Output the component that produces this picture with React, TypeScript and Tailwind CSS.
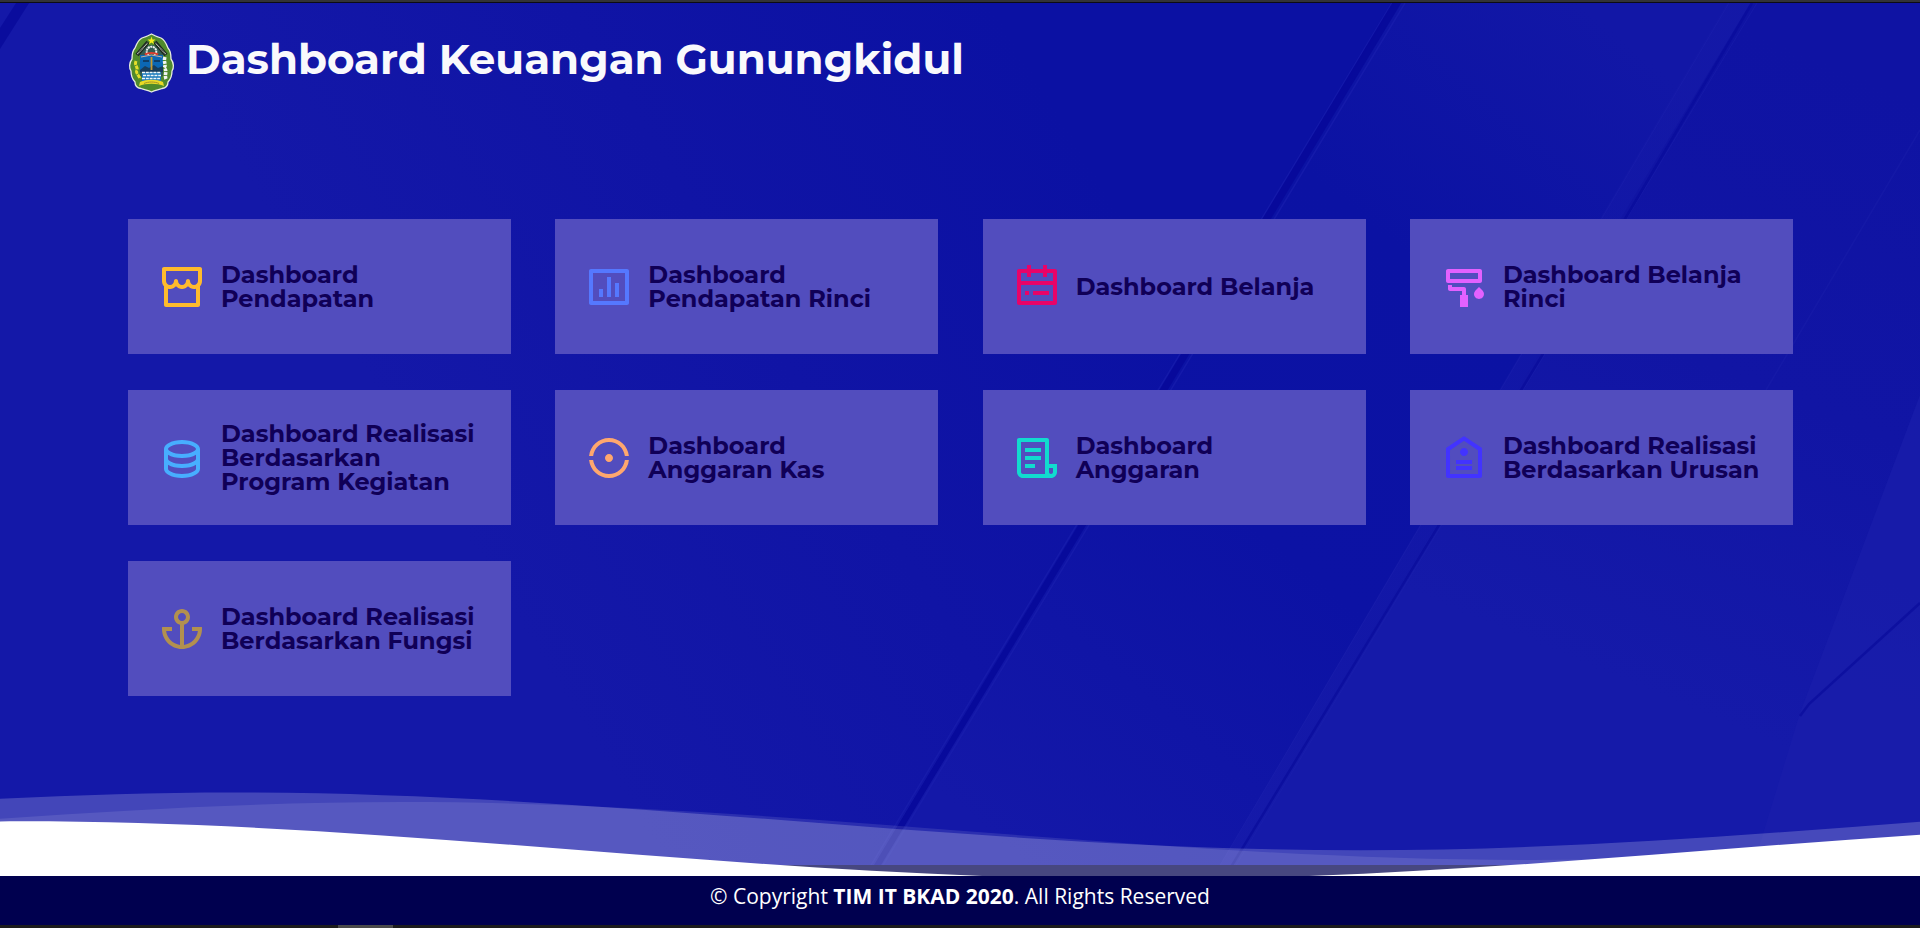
import type { IconType } from "react-icons";
import {
  RiAnchorLine,
  RiBarChartBoxLine,
  RiCalendarTodoLine,
  RiDatabase2Line,
  RiFileList3Line,
  RiGradienterLine,
  RiPaintBrushLine,
  RiPriceTag2Line,
  RiStoreLine,
} from "react-icons/ri";

type Card = { title: string; Icon: IconType; color: string };

const cards: Card[] = [
  { title: "Dashboard Pendapatan", Icon: RiStoreLine, color: "text-[#ffbb2c]" },
  { title: "Dashboard Pendapatan Rinci", Icon: RiBarChartBoxLine, color: "text-[#5578ff]" },
  { title: "Dashboard Belanja", Icon: RiCalendarTodoLine, color: "text-[#e80368]" },
  { title: "Dashboard Belanja Rinci", Icon: RiPaintBrushLine, color: "text-[#e361ff]" },
  { title: "Dashboard Realisasi Berdasarkan Program Kegiatan", Icon: RiDatabase2Line, color: "text-[#47aeff]" },
  { title: "Dashboard Anggaran Kas", Icon: RiGradienterLine, color: "text-[#ffa76e]" },
  { title: "Dashboard Anggaran", Icon: RiFileList3Line, color: "text-[#11dbcf]" },
  { title: "Dashboard Realisasi Berdasarkan Urusan", Icon: RiPriceTag2Line, color: "text-[#4233ff]" },
  { title: "Dashboard Realisasi Berdasarkan Fungsi", Icon: RiAnchorLine, color: "text-[#b2904f]" },
];

function Backdrop() {
  return (
    <svg className="absolute inset-0 h-full w-full" viewBox="0 3 1920 862" preserveAspectRatio="none">
      <defs>
        <linearGradient id="left" gradientUnits="userSpaceOnUse" x1="480" y1="560" x2="1100" y2="180">
          <stop offset="0" stopColor="#1418a8" />
          <stop offset="0.5" stopColor="#1014a5" />
          <stop offset="1" stopColor="#0b11a3" />
        </linearGradient>
        <linearGradient id="mid" gradientUnits="userSpaceOnUse" x1="950" y1="800" x2="1600" y2="20">
          <stop offset="0" stopColor="#1418a8" />
          <stop offset="0.4" stopColor="#0c12a4" />
          <stop offset="0.7" stopColor="#0b12a3" />
          <stop offset="1" stopColor="#1217a6" />
        </linearGradient>
        <linearGradient id="right" gradientUnits="userSpaceOnUse" x1="1800" y1="50" x2="1550" y2="650">
          <stop offset="0" stopColor="#0f13a3" />
          <stop offset="0.5" stopColor="#1115a4" />
          <stop offset="1" stopColor="#151aa9" />
        </linearGradient>
        <linearGradient id="band" gradientUnits="userSpaceOnUse" x1="1740" y1="0" x2="1225" y2="867">
          <stop offset="0" stopColor="#161aa8" stopOpacity="0.35" />
          <stop offset="0.5" stopColor="#161aa9" stopOpacity="0.6" />
          <stop offset="1" stopColor="#181cab" stopOpacity="0.6" />
        </linearGradient>
      </defs>
      <rect x="0" y="0" width="1920" height="870" fill="url(#left)" />
      <polygon points="1397,0 1760,0 1233,870 870,870" fill="url(#mid)" />
      <polygon points="1752,0 1920,0 1920,870 1229,870" fill="url(#right)" />
      <polygon points="1729,0 1752,0 1229,870 1217,870" fill="url(#band)" />
      <polygon points="1920,395 1920,870 1752,870 1800,713" fill="#1a1eab" opacity="0.7" />
      <path d="M1392 3L870 867M1405 3L882 867" stroke="#1c21b0" strokeWidth="1.5" opacity="0.55" />
      <polygon points="1394,0 1403,0 878,870 871,870" fill="#07099a" opacity="0.9" />
      <path d="M1729 3L1219 867M1757 3L1235 867" stroke="#1e23b0" strokeWidth="1" opacity="0.4" />
      <path d="M1752 3L1625 219L1231 867" fill="none" stroke="#080b9b" strokeWidth="2.5" opacity="0.7" />
      <path d="M1920 130L1766 390" stroke="#1e22ad" strokeWidth="1.5" opacity="0.35" />
      <path d="M1920 603L1809 704L1800 716" fill="none" stroke="#0b0e9d" strokeWidth="2.5" opacity="0.8" />
      <polygon points="18,0 31,0 0,49 0,28" fill="#080a9b" opacity="0.85" />
    </svg>
  );
}

function Crest() {
  return (
    <svg className="h-[60px] w-[47px] shrink-0" viewBox="0 0 47 60">
      <path
        d="M23.500 1C27 3 30 4 33 5C37 7 38 10 40 15C43 18 43 22 43 26C46 30 46 35 44 38C44 43 42 47 40 49C40 53 38 55 34 55.500C30 57 27 57 23.500 59C20 57 17 57 13 55.500C9 55 7 53 7 49C5 47 3 43 3 38C1 35 1 30 4 26C4 22 4 18 7 15C9 10 10 7 14 5C17 4 20 3 23.500 1Z"
        fill="#4f8a2c"
        stroke="#e6ebdf"
        strokeWidth="1.300"
      />
      <path d="M12 21C13 9 34 9 35 21V43L23 49L12 43Z" fill="#315b52" />
      <path d="M9 22L20 9M38 22L27 9" stroke="#1d2a20" strokeWidth="4" />
      <path d="M9.500 21L19.500 10M37.500 21L27.500 10" stroke="#d5dacf" strokeWidth="1.200" strokeDasharray="1 .6" />
      <path d="M23.500 3.500L24.500 6.500H27.500L25.200 8.400L26 11.300L23.500 9.600L21 11.300L21.800 8.400L19.500 6.500H22.500Z" fill="#f5eb1c" />
      <circle cx="23.500" cy="18.500" r="4.800" fill="none" stroke="#eef1ef" strokeWidth="2" strokeDasharray="2 .6" />
      <path d="M12 22H35V39H12Z" fill="#0b67b4" />
      <path d="M17 21.500C20 19.500 27 19.500 30 21.500" stroke="#dc3f30" strokeWidth="2.200" fill="none" />
      <path d="M13 24L23.500 22L34 24" stroke="#f0c4a0" strokeWidth=".8" fill="none" />
      <path d="M15 28H21M26 28H32" stroke="#10304f" strokeWidth="1.600" />
      <path d="M12 37L17 33L21 35L26 32L30 35L35 33V39H12Z" fill="#173d5c" />
      <path d="M23.500 24V37" stroke="#c79b2e" strokeWidth="1.800" />
      <path d="M14 39H33V48H14Z" fill="#1979bb" />
      <path d="M14 39.500H33M15 42.500H33M14 45.500H32" stroke="#f2f7f7" strokeWidth="1.500" strokeDasharray="3 .8" />
      <path d="M8 28C6 33 10 33 9 37C7 40 11 42 12 46" stroke="#e6dd2b" strokeWidth="3" strokeDasharray="4 .8" fill="none" />
      <path d="M37 24C35 30 39 31 36 35C40 38 36 41 38 46" stroke="#f3f5f2" strokeWidth="3.500" strokeDasharray="3 1" fill="none" />
      <path d="M12 49C18 46 29 46 35 49L36 53C29 50 18 50 11 53Z" fill="#ebdb26" />
      <path d="M16 50.500C20 48.500 27 48.500 31 50.500" stroke="#a4922a" strokeWidth="1" fill="none" />
    </svg>
  );
}

const wave = "M-160 44c30 0 58-18 88-18s58 18 88 18 58-18 88-18 58 18 88 18v44h-352z";

function Waves() {
  return (
    <svg className="relative mt-auto -mb-[11px] block h-[90px] w-full shrink-0 overflow-hidden" viewBox="0 24 150 28" preserveAspectRatio="none">
      <path d={wave} transform="translate(90.3 0)" fill="#fff" fillOpacity="0.2" />
      <path d={wave} transform="translate(103.4 3)" fill="#fff" fillOpacity="0.1" />
      <path d={wave} transform="translate(73.5 9)" fill="#fff" />
    </svg>
  );
}

export default function App() {
  return (
    <div className="flex h-[928px] w-full flex-col overflow-hidden bg-[#00004f]">
      <div className="h-[3px] shrink-0 border-b border-[#0c0c14] bg-[#333336]" />
      <main className="relative z-10 flex h-[862px] shrink-0 flex-col bg-[#1115a6]">
        <Backdrop />
        <header className="relative flex h-[216px] items-start pt-[30px] pl-32">
          <Crest />
          <h1 className="ml-[11px] whitespace-nowrap font-['Montserrat',sans-serif] text-[42px] leading-[52px] font-bold text-[#f9f9fc]">
            Dashboard Keuangan Gunungkidul
          </h1>
        </header>
        <section className="relative ml-32 grid w-[1665px] grid-cols-[repeat(4,383px)] justify-between gap-y-9">
          {cards.map(({ title, Icon, color }) => (
            <a key={title} className="flex h-[135px] items-center bg-[#524dbe] px-[30px]">
              <Icon className={`mt-px size-12 shrink-0 ${color}`} />
              <h3 className="-mr-2 ml-[15px] font-['Montserrat',sans-serif] text-2xl leading-6 font-bold text-[#100057]">
                {title}
              </h3>
            </a>
          ))}
        </section>
        <Waves />
      </main>
      <footer className="flex h-[60px] shrink-0 justify-center pt-[15px] font-['Open_Sans',sans-serif] text-[21px] leading-8 text-white">
        <p>
          © Copyright <strong className="font-bold">TIM IT BKAD 2020</strong>. All Rights Reserved
        </p>
      </footer>
      <div className="flex h-[3px] shrink-0 bg-[#1c1c1c] pl-[338px]">
        <div className="h-full w-[55px] bg-[#4a4a4a]" />
      </div>
    </div>
  );
}
